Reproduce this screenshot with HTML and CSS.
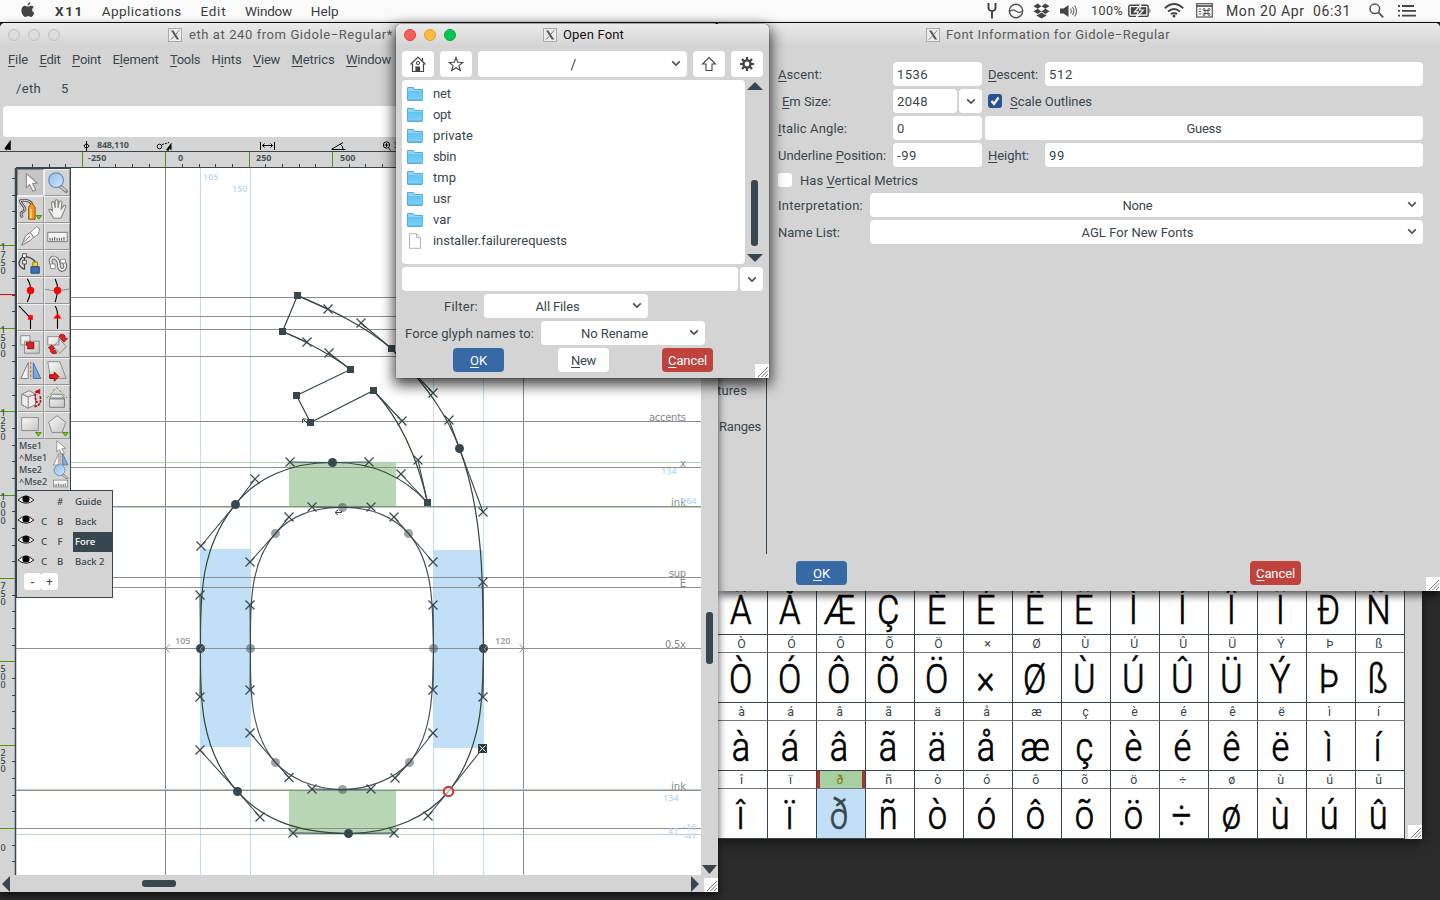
FILE: index.html
```html
<!DOCTYPE html>
<html lang="en">
<head>
<meta charset="utf-8">
<title>X11</title>
<link rel="stylesheet" href="styles.css">
</head>
<body>
<svg class="defs" width="0" height="0">
  <defs>
    <linearGradient id="fold" x1="0" y1="0" x2="0" y2="1"><stop offset="0" stop-color="#63c3f3"/><stop offset="1" stop-color="#7ad0fb"/></linearGradient>
    <linearGradient id="glass" x1="0" y1="0" x2="1" y2="1"><stop offset="0" stop-color="#8fbdf0"/><stop offset="1" stop-color="#d3e6fa"/></linearGradient>
    <linearGradient id="grey" x1="0" y1="0" x2="1" y2="1"><stop offset="0" stop-color="#fafafa"/><stop offset="1" stop-color="#c4c6c2"/></linearGradient>
    <symbol id="xlogo" viewBox="0 0 14 14"><rect x=".5" y=".5" width="13" height="13" fill="#ececec" stroke="#aaa"/><path d="M3 2.5h2.4l5.800 9H8.800z" fill="#555"/><path d="M11.200 2.300 7.800 6.300M6.200 8.200 2.800 11.700" stroke="#777" stroke-width="1"/></symbol>
    <symbol id="chev" viewBox="0 0 10 7"><path d="M1.200 1.300 5 5.100 8.800 1.300" fill="none" stroke="#4b5357" stroke-width="1.700"/></symbol>
    <symbol id="folder" viewBox="0 0 16 14"><path d="M.5 13V.5h6l1 2h8V13z" fill="#8fd3f5" stroke="#54add8"/><path d="M1 4h14.500v9H1z" fill="url(#fold)"/><path d="M.5 13.200h15" stroke="#3f9cc9"/></symbol>
    <symbol id="grip" viewBox="0 0 14 14"><rect width="14" height="14" fill="#fff"/><path d="M3 13 13 3M6.500 13 13 6.500M10 13l3-3" stroke="#777" stroke-width="1" fill="none"/></symbol>
    <symbol id="eye" viewBox="0 0 18 12"><path d="M1 6Q8-1.500 17 6 9 12.500 1 6z" fill="#fff" stroke="#222"/><circle cx="9" cy="5" r="3.600" fill="#000"/></symbol>
    <symbol id="arrow" viewBox="0 0 27 27"><path d="M9 4v15l3.600-3.200L16 23l3.300-1.500-3.500-6.700 5-.6z" fill="#fff" stroke="#8a8a8a" stroke-width="1.200"/></symbol>
    <symbol id="lens" viewBox="0 0 27 27"><path d="m16 17 7 6" stroke="#8b8b86" stroke-width="4" stroke-linecap="round"/><path d="m17 18 5.500 4.500" stroke="#ddd" stroke-width="1.500"/><circle cx="12" cy="11" r="8" fill="url(#glass)" stroke="#6d8fb5" stroke-width="1.300"/></symbol>
    <symbol id="rule" viewBox="0 0 27 27"><rect x="3" y="9" width="21" height="10" fill="#f3f3f1" stroke="#777"/><path d="M5.500 18v-3M8 18v-3M10.500 18v-4M13 18v-3M15.500 18v-3M18 18v-3M20.500 18v-4" stroke="#444" fill="none"/></symbol>
    <symbol id="flip" viewBox="0 0 27 27"><path d="M11 4v17H3z" fill="#f4f4f4" stroke="#777"/><path d="M16.500 4v17h8z" fill="#7ea9dc" stroke="#3d6da9"/><path d="M13.800 3v19" stroke="#c85e16" stroke-dasharray="3 1.500"/></symbol>
  </defs>
</svg>

<header class="menubar">
  <svg class="apple" width="14" height="16" viewBox="0 0 14 16"><path d="M9.300 0C9.500 1.700 8.200 3.400 6.700 3.500 6.500 1.800 8 .3 9.300 0zM12.700 5.200c-2.200 1.300-1.900 4.600.6 5.600-.7 2-1.900 4-3.200 4.100-1 .1-1.500-.6-2.800-.6s-1.800.6-2.800.6C2.300 14.800.3 11 .4 8 .5 5.300 2.300 3.800 4 3.800c1.200 0 2.100.8 3 .8s2-.9 3.400-.8c.9 0 1.800.5 2.300 1.400z" fill="#444"/></svg>
  <nav class="mainmenu">
    <b data-w="29">X11</b><span data-w="80">Applications</span><span data-w="26">Edit</span><span data-w="47">Window</span><span data-w="28">Help</span>
  </nav>
  <div class="status">
    <svg width="12" height="16" viewBox="0 0 12 16"><path d="M2.500 0v4.500Q2.500 8 6 8T9.500 4.500V0M6 8v7.500" fill="none" stroke="#444" stroke-width="1.900"/></svg>
    <svg class="s-ring" width="16" height="16" viewBox="0 0 16 16"><circle cx="8" cy="8" r="6.700" fill="none" stroke="#555" stroke-width="1.400"/><path d="M1.500 9C5 5.500 6 7 8.500 8.500S12 9.500 14.500 8" fill="none" stroke="#555" stroke-width="1.300"/></svg>
    <svg class="s-drop" width="17" height="16" viewBox="0 0 17 16"><path d="M4.600.5 8.500 3.300 4.700 5.800.5 3.200zM12.400.5 8.500 3.300l3.800 2.500 4.200-2.600zM.5 8.300l4.200-2.500 3.800 2.600-3.900 2.700zM16.500 8.300l-4.200-2.500-3.800 2.600 3.900 2.700zM8.500 9.500l3.900 2.500.9-.5v1.300L8.500 15.600 3.700 12.800v-1.300l.9.500z" fill="#444"/></svg>
    <svg class="s-vol" width="18" height="14" viewBox="0 0 18 14"><path d="M0 4.500h3.500L8.500 1v12L3.500 9.500H0z" fill="#444"/><path d="M10.500 4.500q1.500 2.500 0 5M12.500 3q2.800 4 0 8M14.600 1.500q4 5.500 0 11" fill="none" stroke="#666" stroke-width="1.100"/></svg>
    <span class="pct" data-w="32">100%</span>
    <svg class="s-bat" width="24" height="14" viewBox="0 0 24 14"><rect x=".8" y="1.200" width="19.400" height="11.200" rx="1.500" fill="none" stroke="#444" stroke-width="1.400"/><rect x="2.800" y="3.200" width="15.400" height="7.200" fill="#444"/><path d="M21.500 4.500q2 2.300 0 4.600z" fill="#444"/><path d="M13 .5 6.500 7.800h3.800L8.500 13.300 15.500 6h-4z" fill="#444" stroke="#fafafa" stroke-width="1.200"/></svg>
    <svg class="s-wifi" width="20" height="15" viewBox="0 0 20 15"><path d="M.8 5.200Q10-3 19.200 5.200M4 8.400q6-5 12 0M7 11.300q3-2.500 6 0" fill="none" stroke="#444" stroke-width="1.900"/><circle cx="10" cy="13" r="1.500" fill="#444"/></svg>
    <svg class="s-cal" width="17" height="15" viewBox="0 0 17 15"><rect x=".7" y=".7" width="15.600" height="13.300" fill="none" stroke="#555" stroke-width="1.200"/><path d="M1 3h15" stroke="#444" stroke-width="1.600"/><path d="M3 6h2M3 8.500h2M3 11h2" stroke="#666"/><path d="M9 7.500v3h3v-3zM9 7.500H8A1 1 0 1 1 9 6.500zM12 7.500v-1a1 1 0 1 1 1 1zM9 10.500v1a1 1 0 1 1-1-1zM12 10.500h1a1 1 0 1 1-1 1z" stroke="#444" stroke-width=".9" fill="none"/></svg>
    <span class="clock" data-w="125">Mon 20 Apr&nbsp; 06:31</span>
    <svg class="s-find" width="15" height="15" viewBox="0 0 15 15"><circle cx="5.800" cy="5.800" r="4.800" fill="none" stroke="#555" stroke-width="1.500"/><path d="m9.300 9.300 5 5" stroke="#555" stroke-width="1.900"/></svg>
    <svg class="s-list" width="19" height="12" viewBox="0 0 19 12"><path d="M0 1h2M4 1h12M0 5.800h2M4 5.800h14M0 10.600h2M4 10.600h14" stroke="#444" stroke-width="1.800"/></svg>
  </div>
</header>

<section class="window fontview">
  <div class="glyphs" id="glyphs"></div>
  <div class="fv-scroll"></div>
  <svg class="grip" width="14" height="14"><use href="#grip"/></svg>
</section>

<section class="window fontinfo">
  <div class="titlebar"><svg width="14" height="14"><use href="#xlogo"/></svg><span data-w="224">Font Information for Gidole−Regular</span></div>
  <div class="form">
    <div class="frow"><label class="l1"><span data-w="44"><u>A</u>scent:</span></label><div class="field w1"><span data-w="31">1536</span></div><label class="l2"><span data-w="50"><u>D</u>escent:</span></label><div class="field grow"><span data-w="24">512</span></div></div>
    <div class="frow"><label class="l1 ind"><span data-w="49"><u>E</u>m Size:</span></label><div class="field wem"><span data-w="31">2048</span></div><div class="field drop"><svg width="10" height="7"><use href="#chev"/></svg></div><i class="check on"><svg width="14" height="14" viewBox="0 0 14 14"><path d="m3.500 7 2.500 3 4.500-6.500" fill="none" stroke="#fff" stroke-width="2.200"/></svg></i><span data-w="82"><u>S</u>cale Outlines</span></div>
    <div class="frow"><label class="l1"><span data-w="69"><u>I</u>talic Angle:</span></label><div class="field w1"><span data-w="7">0</span></div><div class="field grow mid gap3"><span data-w="35">Guess</span></div></div>
    <div class="frow"><label class="l1"><span data-w="108">Underline <u>P</u>osition:</span></label><div class="field w1"><span data-w="20">-99</span></div><label class="l2"><span data-w="41"><u>H</u>eight:</span></label><div class="field grow"><span data-w="16">99</span></div></div>
    <div class="frow vrow"><i class="check"></i><span data-w="118">Has <u>V</u>ertical Metrics</span></div>
    <div class="frow"><label class="l3"><span data-w="85">Interpretation:</span></label><div class="field grow mid sel"><span data-w="30">None</span><svg width="10" height="7"><use href="#chev"/></svg></div></div>
    <div class="frow"><label class="l3"><span data-w="62">Name List:</span></label><div class="field grow mid sel"><span data-w="112">AGL For New Fonts</span><svg width="10" height="7"><use href="#chev"/></svg></div></div>
  </div>
  <aside class="tabs"><span data-w="30">tures</span><span data-w="42">Ranges</span></aside>
  <footer class="actions"><button class="btn blue"><span data-w="17"><u>O</u>K</span></button><button class="btn red"><span data-w="39"><u>C</u>ancel</span></button></footer>
  <svg class="grip" width="14" height="14"><use href="#grip"/></svg>
</section>

<section class="window charview">
  <div class="titlebar"><i class="light"></i><i class="light"></i><i class="light"></i><svg width="14" height="14"><use href="#xlogo"/></svg><span data-w="204">eth at 240 from Gidole−Regular*</span></div>
  <nav class="cmenu"><span data-w="20"><u>F</u>ile</span><span data-w="21"><u>E</u>dit</span><span data-w="29"><u>P</u>oint</span><span data-w="46">E<u>l</u>ement</span><span data-w="30"><u>T</u>ools</span><span data-w="30">H<u>i</u>nts</span><span data-w="27"><u>V</u>iew</span><span data-w="43"><u>M</u>etrics</span><span data-w="45"><u>W</u>indow</span></nav>
  <div class="cinfo"><span data-w="25">/eth</span><span>5</span></div>
  <div class="wordbox"></div>
  <svg class="rulertop" width="718" height="31" viewBox="0 137 718 31">
    <path d="M5 149 10 142V150M7 146l-1 4" fill="#000" stroke="#000" stroke-width="1.500"/>
    <path d="M86.500 141v10M83.800 146l2.700-2.700 2.700 2.700-2.700 2.700z" fill="#d4d4d4" stroke="#000"/>
    <circle cx="159.500" cy="146.500" r="2.300" fill="none" stroke="#000"/><path d="M162 144.500l7-2" stroke="#000" stroke-dasharray="2 1"/><path d="M166 150 171.500 142.500v8l-2-2-1 2.500z" fill="#000"/>
    <path d="M260.500 142v8M274.500 142v8M262.500 145.500h10M264.500 143.500l-2 2 2 2M270.500 143.500l2 2-2 2" fill="none" stroke="#000"/>
    <path d="M331.500 149.500h14M332 149l11-6.500M340 144q3 2 3 5" fill="none" stroke="#000"/>
    <circle cx="386.500" cy="145" r="3.200" fill="none" stroke="#000"/><path d="M384.500 145h4M386.500 143v4M388.500 147.500l2 3" stroke="#000"/>
    <text class="rl" x="97" y="148" textLength="32">848,110</text><text class="rl" x="394" y="148">300%</text>
    <g id="ticksTop"></g>
  </svg>
  <div class="work">
    <svg class="canvas" width="701" height="708" viewBox="0 168 701 708">
      <rect x="0" y="168" width="16" height="708" fill="#d4d4d4"/><rect x="16" y="168" width="686" height="708" fill="#fff"/>
      <g id="ticksLeft"></g>
      <path d="M15.500 168v708" stroke="#38474f" stroke-width="1.500"/>
      <path d="M200 549h50v198h-50zM433 550h50v198h-50z" fill="#c1dff6"/>
      <path d="M289 462h107v44H289zM289 790h107v44H289z" fill="#b6d6b4"/>
      <path d="M200.500 168v708M250.500 168v708M433.500 168v708M483.500 168v708" stroke="#bfddf5"/>
      <path d="M16 297.500h686M16 316.500h686M16 329.500h686M16 356.500h686M16 421.500h686M16 467.500h686M16 506.500h686M16 577.500h686M16 587.500h686M16 648.500h686M16 790.500h686M16 828.500h686M165.500 168v708M523.500 168v708" stroke="#8c8e90"/>
      <path d="M16 462.500h686M16 507.500h686M16 789.500h686M16 834.500h686" stroke="#a8cfa4" stroke-opacity=".85"/>
      <g class="gl" text-anchor="end"><text x="686" y="421" textLength="37">accents</text><text x="686" y="467">x</text><text x="686" y="506" textLength="15">ink</text><text x="686" y="577" textLength="17">sup</text><text x="686" y="587">E</text><text x="686" y="648" textLength="21">0.5x</text><text x="686" y="790" textLength="15">ink</text></g>
      <g class="bl"><text x="203" y="180">105</text><text x="232" y="192">150</text><text x="661" y="474">134</text><text x="681" y="504">964</text><text x="663" y="801">134</text><text x="683" y="830">-16</text><text x="668" y="834">41</text><text x="683" y="839">-41</text></g>
      <g class="gm"><text x="175" y="644">105</text><text x="495" y="644">120</text></g>
      <g id="outline"></g>
    </svg>
    <div class="vscroll"><i class="thumb"></i><svg width="15" height="9"><path d="M0 0h15L7.500 9z" fill="#38474f"/></svg></div>
  </div>
  <div class="hscroll"><svg width="8" height="16"><path d="M8 0v16L0 8z" fill="#38474f"/></svg><i class="thumb"></i><svg class="right" width="8" height="16"><path d="M0 0v16l8-8z" fill="#38474f"/></svg></div>
  <svg class="grip" width="14" height="14"><use href="#grip"/></svg>
</section>

<section class="palette tools">
  <div class="toolgrid">
    <i class="on"><svg viewBox="0 0 27 27"><use href="#arrow"/></svg></i>
    <i><svg viewBox="0 0 27 27"><use href="#lens"/></svg></i>
    <i><svg viewBox="0 0 27 27"><path d="M5 22C-1 15 10 17 7 11.500S-1 3.500 6 3.500q9 0 9 6" fill="none" stroke="#555" stroke-width="3"/><path d="M5 22C-1 15 10 17 7 11.500S-1 3.500 6 3.500q9 0 9 6" fill="none" stroke="#e8e8e8" stroke-width="1"/><path d="M11.500 11 14.500 6l4 5v13h-7z" fill="#f2951c" stroke="#8f5105"/><path d="M14 13v10" stroke="#ffd084" stroke-width="2"/><path d="M19.500 20h6l-3 4z" fill="#73d216" stroke="#3f8a05"/></svg></i>
    <i><svg viewBox="0 0 27 27"><path d="M9.500 23 4 14q1-2 4 1L7 6q1.500-2 3 0l1 6V4q1.500-2 3 0v8l1.500-7q1.800-1.500 2.800.5L17.500 13l3-4q2-.5 2 1.500L19 19l-2 4z" fill="#f2f2f0" stroke="#85857f" stroke-width="1.200"/></svg></i>
    <i><svg viewBox="0 0 27 27"><path d="M4 23 8 13l5-4 4 5-4 4z" fill="#ededeb" stroke="#777"/><path d="M13.500 9 20 3l3.500 2-1.500 6-5 3.500z" fill="#fff" stroke="#888"/><path d="m6 20 7-7" stroke="#777"/></svg></i>
    <i><svg viewBox="0 0 27 27"><use href="#rule"/></svg></i>
    <i><svg viewBox="0 0 27 27"><path d="M1 13Q3 5 9 6t10 6M7 5v15M7 20Q1 17 1 13" fill="none" stroke="#444" stroke-width="1.400"/><path d="M5 3h4v4H5zM5 10h4v4H5z" fill="#fff" stroke="#444"/><path d="M16 12h5v5h-5z" fill="#f5d434" stroke="#987b00"/><path d="M14 17h9v7h-9z" fill="#3d70b4" stroke="#1e4274"/></svg></i>
    <i class="hl"><svg viewBox="0 0 27 27"><path d="M8 16C3 8 9 5 13 9s0 9 4 11 7-4 3-8" fill="none" stroke="#666" stroke-width="4"/><path d="M8 16C3 8 9 5 13 9s0 9 4 11 7-4 3-8" fill="none" stroke="#eee" stroke-width="2"/><path d="M6 14h5v5H6zM17 9h5v4h-5z" fill="#fff" stroke="#888"/></svg></i>
    <i><svg viewBox="0 0 27 27"><path d="M10 1q4 6 3.500 12.500T10 26" fill="none" stroke="#000" stroke-width="1.200"/><circle cx="13.500" cy="13.500" r="4" fill="#f00"/></svg></i>
    <i><svg viewBox="0 0 27 27"><path d="M0 12q6 2 13 1.500T26 12" fill="none" stroke="#888"/><path d="M11 1q3 6 2.500 12.500T11 26" fill="none" stroke="#000" stroke-width="1.200"/><circle cx="13.500" cy="13.500" r="4" fill="#f00"/></svg></i>
    <i><svg viewBox="0 0 27 27"><path d="M1 1 13.500 14v12" fill="none" stroke="#000" stroke-width="1.200"/><path d="M11 11h5v5h-5z" fill="#f00"/></svg></i>
    <i><svg viewBox="0 0 27 27"><path d="M11 1q3 5 2.500 12v13" fill="none" stroke="#000" stroke-width="1.200"/><path d="M9 14.500 13.500 9l4.500 5.500z" fill="#f00"/></svg></i>
    <i><svg viewBox="0 0 27 27"><path d="M3 4h10v10H3zM7 10h16v13H7z" fill="url(#grey)" stroke="#888"/><path d="m9 11 2 1 2-2 2 2 2-1v7h-7l1-2-2-2z" fill="#dd2020" stroke="#900"/></svg></i>
    <i><svg viewBox="0 0 27 27"><path d="M3 5h12v9H3zM16 8l7 8-7 7-7-7z" fill="url(#grey)" stroke="#888"/><path d="M16 3q6-2 6 4h2.500l-4 4-4-4h2q0-2-3-1zM3.500 17l4-3 3 4H8.500q0 3 3 2l1 3q-7 2-7-5z" fill="#dd2020" stroke="#900" stroke-width=".7"/></svg></i>
    <i><svg viewBox="0 0 27 27"><use href="#flip"/></svg></i>
    <i><svg viewBox="0 0 27 27"><path d="M3 3h13l7 18H6z" fill="url(#grey)" stroke="#888"/><path d="M5 17h5v-3l5 5-5 5v-3H5z" fill="#dd2020" stroke="#900"/></svg></i>
    <i><svg viewBox="0 0 27 27"><path d="m4 9 8-4 7 4v11l-8 4-7-4zM4 9l7 3 8-3M11 12v12" fill="#eee" stroke="#777"/><path d="M21 5q-5 6 0 13M24 11q2 11-7 11" fill="none" stroke="#b11" stroke-width="1.800" stroke-dasharray="3 1"/><path d="m18 6 6-3v6z" fill="#c11"/></svg></i>
    <i><svg viewBox="0 0 27 27"><path d="M5 14h16v9H5zM8 9h10l3 4H5z" fill="url(#grey)" stroke="#777"/><path d="M2 13 12.500 1.500 24 13" fill="none" stroke="#4e9a06" stroke-dasharray="3 2"/></svg></i>
    <i><svg viewBox="0 0 27 27"><path d="M4 5h18v14H4z" fill="url(#grey)" stroke="#888"/><path d="M19 21h6l-3 4z" fill="#73d216" stroke="#3f8a05"/></svg></i>
    <i><svg viewBox="0 0 27 27"><path d="m13 3 9.500 7-4 11H7.500L4 10z" fill="url(#grey)" stroke="#888"/><path d="M19 21h6l-3 4z" fill="#73d216" stroke="#3f8a05"/></svg></i>
  </div>
  <div class="mse">
    <ul><li>Mse1</li><li>^Mse1</li><li>Mse2</li><li>^Mse2</li></ul>
    <div class="mico"><svg viewBox="4 3 20 20"><use href="#arrow" width="27" height="27"/></svg><svg viewBox="2 2 23 22"><use href="#flip" width="27" height="27"/></svg><svg viewBox="2 2 23 22"><use href="#lens" width="27" height="27"/></svg><svg viewBox="2 3 23 22"><use href="#rule" width="27" height="27"/></svg></div>
  </div>
</section>

<section class="palette layers">
  <div class="lrow"><svg width="18" height="12"><use href="#eye"/></svg><b></b><b>#</b><span>Guide</span></div>
  <div class="lrow"><svg width="18" height="12"><use href="#eye"/></svg><b>C</b><b>B</b><span>Back</span></div>
  <div class="lrow"><svg width="18" height="12"><use href="#eye"/></svg><b>C</b><b>F</b><span class="cur">Fore</span></div>
  <div class="lrow"><svg width="18" height="12"><use href="#eye"/></svg><b>C</b><b>B</b><span>Back 2</span></div>
  <div class="lbtn"><button>-</button><button>+</button></div>
</section>

<section class="window dialog">
  <div class="titlebar"><i class="light r"></i><i class="light y"></i><i class="light g"></i><svg width="14" height="14"><use href="#xlogo"/></svg><span data-w="61">Open Font</span></div>
  <div class="dtools">
    <div class="field sq"><svg width="16" height="16" viewBox="0 0 16 16"><path d="M.5 8.500 8 1l7.500 7.500M12.500 5V2" fill="none" stroke="#444" stroke-width="1.200"/><path d="M2.500 7.500v8h11v-8M6 15.500V11h3.500v4.500" fill="none" stroke="#444" stroke-width="1.200"/><path d="M6 11h3.500v4.500H6z" fill="#444"/><circle cx="8" cy="7" r="1.600" fill="none" stroke="#444"/></svg></div>
    <div class="field sq"><svg width="16" height="16" viewBox="0 0 16 16"><path d="m8 1.500 1.800 4.800 5 .2-3.900 3.100 1.400 4.900L8 11.700l-4.300 2.800 1.400-4.900L1.200 6.500l5-.2z" fill="none" stroke="#444" stroke-width="1.100"/></svg></div>
    <div class="field grow mid sel path"><span>/</span><svg width="10" height="7"><use href="#chev"/></svg></div>
    <div class="field sq"><svg width="16" height="16" viewBox="0 0 16 16"><path d="M8 1.500 14.500 8H11v6.500H5V8H1.500z" fill="none" stroke="#444" stroke-width="1.100"/></svg></div>
    <div class="field sq"><svg width="16" height="16" viewBox="0 0 16 16"><path d="M8 1v14M1 8h14M3 3l10 10M13 3 3 13" stroke="#444" stroke-width="2.200"/><circle cx="8" cy="8" r="3.600" fill="#fff" stroke="#444" stroke-width="2.400"/></svg></div>
  </div>
  <div class="dlist">
    <ul class="files">
      <li><svg width="16" height="14"><use href="#folder"/></svg><span data-w="18">net</span></li>
      <li><svg width="16" height="14"><use href="#folder"/></svg><span data-w="18">opt</span></li>
      <li><svg width="16" height="14"><use href="#folder"/></svg><span data-w="40">private</span></li>
      <li><svg width="16" height="14"><use href="#folder"/></svg><span data-w="23">sbin</span></li>
      <li><svg width="16" height="14"><use href="#folder"/></svg><span data-w="23">tmp</span></li>
      <li><svg width="16" height="14"><use href="#folder"/></svg><span data-w="18">usr</span></li>
      <li><svg width="16" height="14"><use href="#folder"/></svg><span data-w="18">var</span></li>
      <li><svg width="16" height="16" viewBox="0 0 16 16"><path d="M2.500.7h7l4 4v10.600h-11z" fill="#fdfdfd" stroke="#b4b4b4"/><path d="M9.500.7v4h4" fill="none" stroke="#b4b4b4"/></svg><span data-w="134">installer.failurerequests</span></li>
    </ul>
    <div class="dscroll"><svg width="16" height="8"><path d="M0 8h16L8 0z" fill="#38474f"/></svg><i class="thumb"></i><svg width="16" height="8"><path d="M0 0h16L8 8z" fill="#38474f"/></svg></div>
  </div>
  <div class="drow name"><div class="field grow"></div><div class="field drop"><svg width="10" height="7"><use href="#chev"/></svg></div></div>
  <div class="drow filter"><span data-w="34">Filter:</span><div class="field mid sel"><span data-w="44">All Files</span><svg width="10" height="7"><use href="#chev"/></svg></div></div>
  <div class="drow force"><span data-w="129">Force glyph names to:</span><div class="field mid sel"><span data-w="67">No Rename</span><svg width="10" height="7"><use href="#chev"/></svg></div></div>
  <div class="drow dbtns"><button class="btn blue"><span data-w="17"><u>O</u>K</span></button><button class="btn"><span data-w="25"><u>N</u>ew</span></button><button class="btn red"><span data-w="39"><u>C</u>ancel</span></button></div>
  <svg class="grip" width="14" height="14"><use href="#grip"/></svg>
</section>
<script src="app.js"></script>
</body>
</html>
```
FILE: styles.css
```css
* { box-sizing: border-box; }
body { margin: 0; width: 1440px; height: 900px; overflow: hidden; position: relative; background: #2b2b2b; font: 13px/16px Roboto, "Noto Sans", sans-serif; color: #38474f; }
u { text-decoration: underline; text-underline-offset: 2px; text-decoration-thickness: 1px; }
svg { display: block; flex: none; }
ul { list-style: none; margin: 0; padding: 0; }
span { white-space: pre; }
button { border: 0; padding: 0; font: inherit; color: inherit; }
.defs { position: absolute; }

.menubar { display: flex; height: 23px; padding: 0 23px 1px 21px; align-items: center; justify-content: space-between; background: #fafafa; border-bottom: 1px solid #111; font-size: 13.5px; color: #3c3c3c; }
.apple { margin-top: -1px; }
.mainmenu { display: flex; gap: 18.7px; margin-left: 20px; margin-right: auto; }
.mainmenu b { margin-right: -1px; font-weight: 700; }
.status { display: flex; align-items: center; }
.s-ring { margin-left: 10px; }
.s-drop { margin-left: 9px; }
.s-vol { margin-left: 10px; }
.pct { margin-left: 13px; font-size: 12.5px; }
.s-bat { margin-left: 5px; }
.s-wifi { margin-left: 12px; }
.s-cal { margin-left: 12px; }
.clock { margin-left: 13px; font-size: 14px; }
.s-find { margin-left: 18px; }
.s-list { margin-left: 14px; }

.window { position: absolute; background: #d4d4d4; }
.titlebar { display: flex; align-items: center; height: 22px; background: linear-gradient(#ebebeb, #d4d4d4); border-radius: 5px 5px 0 0; color: #5b5b5b; }
.light { width: 12px; height: 12px; margin-right: 8px; border-radius: 50%; border: 1px solid #c0c0c0; background: #dcdcdc; }
.grip { position: absolute; right: 0; bottom: 0; }
.field { display: flex; align-items: center; height: 24px; padding: 0 4px; background: #fff; border-radius: 4px; }
.field span, .btn span, .drow > span { padding-top: 2px; }
.grow { flex: 1; }
.mid { justify-content: center; }
.sel { position: relative; }
.sel svg { position: absolute; right: 6px; top: 8px; }
.thumb { display: block; background: #38474f; border-radius: 3px; }
.btn { display: flex; align-items: center; justify-content: center; width: 51px; height: 24px; border-radius: 4px; background: #fff; }
.blue { background: #3769a4; color: #fff; }
.red { background: #c0423d; color: #fff; }

.fontview { left: 718px; top: 583px; width: 704px; height: 256px; display: flex; box-shadow: 0 3px 12px rgba(0,0,0,.6); }
.glyphs { display: grid; grid-template-columns: 50px repeat(13, 49px); grid-template-rows: 52px repeat(3, 18px 50px); width: 687px; background: #fff; border-bottom: 1px solid #38474f; }
.g, .n { display: flex; align-items: center; justify-content: center; overflow: hidden; border-right: 1px solid #38474f; }
.g { border-bottom: 1px solid #38474f; color: #000; font-size: 40.5px; font-weight: 300; line-height: 50px; -webkit-text-stroke: .7px currentColor; }
.g span { transform: translate(-2px, 1px) scaleX(.85); }
.n { border-bottom: 1px solid #777; font-size: 13px; }
.n span { transform: translateX(-1px) scaleX(.95); }
.n.cur { background: #a6d0a2; color: #7a7a10; box-shadow: inset 3px 0 #b03030, inset -3px 0 #b03030; }
.g.cur { background: #c1dff6; color: #38474f; }
.fv-scroll { flex: 1; }

.fontinfo { left: 718px; top: 23px; width: 722px; height: 568px; border-radius: 0 5px 0 0; box-shadow: 0 4px 9px rgba(0,0,0,.7); }
.fontinfo .titlebar { padding: 1px 0 0 208px; border-radius: 0 5px 0 0; gap: 6px; }
.form { display: flex; flex-direction: column; gap: 3px; padding: 17px 17px 0 60px; }
.frow { display: flex; align-items: center; height: 24px; }
.frow label, .frow > span { padding-top: 2px; }
.l1 { width: 115px; }
.frow .ind { padding-left: 4px; }
.l2 { width: 57px; margin-left: 6px; }
.w1 { width: 89px; }
.wem { width: 64px; }
.drop { width: 23px; margin-left: 2px; justify-content: center; padding: 0; }
.gap3 { margin-left: 3px; }
.l3 { width: 92px; }
.form .sel > span { margin-right: 18px; }
.check { width: 14px; height: 14px; margin: 0 8px 0 6px; border-radius: 3px; background: #fff; }
.check.on { background: #285293; }
.vrow { height: 20px; }
.vrow .check { margin-left: 0; }
.tabs { position: absolute; left: 0; top: 300px; width: 49px; height: 231px; padding: 60px 0 0 1px; display: flex; flex-direction: column; align-items: flex-start; gap: 20px; border-right: 1px solid #38474f; }
.tabs span:first-child { margin-left: -2px; }
.actions { position: absolute; left: 78px; right: 139px; bottom: 6px; display: flex; justify-content: space-between; }

.charview { left: 0; top: 23px; width: 718px; height: 869px; border-radius: 5px 5px 0 0; display: flex; flex-direction: column; box-shadow: 0 3px 9px rgba(0,0,0,.7); }
.charview .titlebar { padding: 1px 0 0 8px; }
.charview .titlebar svg { margin: 0 7px 0 100px; }
.cmenu { display: flex; gap: 11.5px; padding: 7px 0 0 8px; height: 34px; }
.cinfo { display: flex; gap: 20px; align-items: center; height: 18px; padding: 2px 0 0 16px; }
.wordbox { height: 31px; margin: 9px 3px 0; background: #fff; border-radius: 4px; }
.rl { font: 700 9px "Noto Sans", sans-serif; fill: #47565d; }
.vr { font: 500 9px "Noto Sans", sans-serif; fill: #38474f; text-anchor: middle; }
.work { display: flex; height: 707px; }
.gl { font: 10px "DejaVu Sans", sans-serif; fill: #85898c; }
.bl { font: 600 9px "Noto Sans", sans-serif; fill: #bcdcf6; }
.gm { font: 600 9px "Noto Sans", sans-serif; fill: #9a9ea1; }
.vscroll { display: flex; flex-direction: column; align-items: center; width: 17px; padding-top: 444px; }
.vscroll .thumb { width: 7px; height: 52px; margin-bottom: 201px; }
.hscroll { display: flex; align-items: center; height: 17px; padding-left: 2px; background: #d4d4d4; z-index: 1; }
.hscroll .thumb { width: 34px; height: 7px; margin-left: 132px; }
.hscroll .right { margin-left: 515px; }
.charview .grip { z-index: 2; }

.palette { position: absolute; background: #d4d4d4; border: 1px solid #38474f; font: 500 9.500px/12px "Noto Sans", sans-serif; }
.tools { left: 16px; top: 168px; width: 55px; height: 323px; box-shadow: 0 -1px #38474f; }
.toolgrid { display: grid; grid-template-columns: 27px 26px; grid-auto-rows: 27px; }
.toolgrid i { border: 1px solid; border-color: #f0f0f0 #969696 #969696 #f0f0f0; }
.toolgrid i.on { background: #c6c6c6; border-color: #888 #eee #eee #888; }
.toolgrid svg { width: 25px; height: 25px; }
.mse { display: flex; justify-content: space-between; padding: 1px 1px 0 2px; font: 500 9px/12px "Noto Sans", sans-serif; }
.mico { display: flex; flex-direction: column; }
.mico svg { width: 17px; height: 15px; margin-bottom: -3px; }
.layers { left: 16px; top: 490px; width: 97px; height: 108px; }
.lrow { display: flex; align-items: center; height: 20px; }
.lrow:first-child { margin-top: 1px; }
.lrow svg { margin-top: -4px; }
.lrow b { width: 16px; text-align: center; font-weight: 500; }
.lrow b:nth-of-type(1) { margin-left: 1px; }
.lrow span { margin-left: 5px; padding-left: 2px; width: 39px; line-height: 20px; }
.lrow .cur { background: #38474f; color: #fff; }
.lbtn { display: flex; margin: 1px 0 0 7px; }
.lbtn button { width: 17px; height: 17px; background: #fff; border-radius: 3px; font-size: 12px; line-height: 17px; }

.dialog { left: 396px; top: 24px; width: 373px; height: 354px; border-radius: 5px 5px 0 0; box-shadow: 0 5px 14px 2px rgba(0,0,0,.75), 0 0 1px #000; }
.dialog .titlebar { padding-left: 8px; color: #111; }
.dialog .titlebar svg { margin: 0 6px 0 79px; }
.light.r { background: #fc5b57; border-color: #e2403c; }
.light.y { background: #fdbc40; border-color: #dfa033; }
.light.g { background: #00c951; border-color: #00a93c; }
.dtools { display: flex; gap: 6px; margin: 5px 6px 0; }
.dtools .field { height: 26px; }
.sq { width: 32px; padding: 0; justify-content: center; }
.path span { margin-right: 18px; font-size: 14px; }
.dtools .path svg { top: 9px; }
.dlist { display: flex; margin: 3px 6px 0; height: 184px; }
.files { width: 343px; padding: 3px 5px; background: #fff; border-radius: 4px; }
.files li { display: flex; align-items: center; gap: 10px; height: 21px; }
.dscroll { display: flex; flex-direction: column; align-items: center; width: 17px; margin-left: 1px; padding-top: 2px; }
.dscroll .thumb { width: 7px; height: 66px; margin: 90px 0 8px; }
.drow { display: flex; align-items: center; height: 24px; margin: 3px 6px 0; }
.drow .sel { width: 164px; }
.drow .sel > span { margin-right: 17px; }
.filter > span { margin: 0 6px 0 42px; }
.force > span { margin: 0 7px 0 3px; }
.dbtns { padding-left: 51px; gap: 54px; }
.dbtns .red { margin-left: -1px; }
```
FILE: app.js
```js
const el = id => document.getElementById(id);

// Glyph table of the font view
const rows = ['ÄÅÆÇÈÉÊËÌÍÎÏÐÑ', 'ÒÓÔÕÖ×ØÙÚÛÜÝÞß', 'àáâãäåæçèéêëìí', 'îïðñòóôõö÷øùúû'];
el('glyphs').innerHTML = rows.map((r, i) => {
  const cells = k => [...r].map(c => `<div class="${k}${c === 'ð' ? ' cur' : ''}"><span>${c}</span></div>`).join('');
  return (i ? cells('n') : '') + cells('g');
}).join('');

// Rulers
let top_ = '<path d="M0 151.500h718M16 167.500h702" stroke="#38474f"/>';
for (let i = -4; i < 36; i++) {
  const x = 82.5 + i * 16.66;
  if (x > 16) top_ += i % 5 === 0 ? `<path d="M${Math.round(x - .5) + .5} 152v15" stroke="#4e9a06"/>` : `<path d="M${Math.floor(x) + .5} 164v4" stroke="#38474f"/>`;
}
[[88, '-250'], [178, '0'], [256, '250'], [340, '500']].forEach(([x, t]) => { top_ += `<text class="rl" x="${x}" y="161">${t}</text>`; });
el('ticksTop').innerHTML = top_;

let left = '<path d="M0 294.500h16" stroke="#e00"/>';
for (let i = -4; i < 38; i++) {
  const y = Math.floor(245.3 + i * 16.66) + .5;
  left += i % 5 === 0 ? `<path d="M0 ${y}h15" stroke="#4e9a06"/>` : `<path d="M12 ${y}h4" stroke="#38474f"/>`;
}
[[247, '1750'], [330, '1500'], [413, '1250'], [497, '1000'], [586, '750'], [669, '500'], [753, '250'], [848, '0']].forEach(([y, t]) => {
  [...t].forEach((c, k) => { left += `<text class="vr" x="3" y="${y + 3 + k * 8}">${c}</text>`; });
});
el('ticksLeft').innerHTML = left;

// Contours: [x, y] is a line target, six numbers are a cubic segment
const outer = [[310.5, 422.5], [296.5, 395.5], [350.5, 369.5], [329, 353, 307, 342, 282.5, 331.5], [297.5, 295.5],
  [328, 309, 361, 323, 391.5, 348.5], [433, 393, 449, 420, 459.5, 448.5], [483, 512, 483, 582, 483.5, 648.5],
  [483, 697, 482.5, 748.5, 448.5, 791.5], [428, 816, 394, 833, 348.5, 833.5], [293, 833, 260, 817, 237.5, 791.5],
  [200, 750, 200, 697, 200.5, 648.5], [200, 595, 201, 546, 235.5, 504.5], [255, 479, 290, 462, 332.5, 462.5],
  [369, 462, 401, 474, 427.5, 502.5], [418, 460, 402, 421, 373.5, 390.5], [310.5, 422.5]];
const inner = [[342.5, 507.5], [312, 507, 289, 517, 275.5, 533.5], [250, 562, 250, 605, 250.5, 648.5],
  [250, 690, 250, 733, 275.5, 762.5], [289, 777.5, 312, 789, 342.5, 789.5], [371, 789, 395, 778, 409.5, 762.5],
  [433, 733, 433, 690, 433.5, 648.5], [433, 605, 433, 562, 408.5, 533.5], [394, 517, 371, 507, 342.5, 507.5]];
const smooth = ['459.5', '483.5', '348.5', '237.5', '200.5', '235.5', '332.5'];
const draw = (pts, color, isInner) => {
  let d = '', handles = '', marks = '', prev;
  pts.forEach((p, i) => {
    d += (i ? (p.length > 2 ? 'C' : 'L') : 'M') + p.join(' ');
    const x = p[p.length - 2], y = p[p.length - 1];
    if (p.length > 2) {
      handles += `M${prev[0]} ${prev[1]}L${p[0]} ${p[1]}M${x} ${y}L${p[2]} ${p[3]}`;
      [[p[0], p[1]], [p[2], p[3]]].forEach(([a, b]) => {
        marks += a === 482.5 ? `<path d="M478 744h9v9h-9z" fill="#2c3a41"/><path d="M479.500 745.500l6 6m0-6l-6 6" stroke="#fff"/>`
          : `<path d="M${a - 4.5} ${b - 4.5}l9 9m0-9l-9 9" stroke="#38474f" stroke-width="1.200"/>`;
      });
    }
    if (isInner) marks += i ? `<circle cx="${x}" cy="${y}" r="4.500" fill="#38474f" fill-opacity=".5"/>` : '';
    else if (x === 448.5) marks += `<circle cx="${x}" cy="${y}" r="4.700" fill="#fff" fill-opacity=".6" stroke="#c0423d" stroke-width="2.200"/>`;
    else if (smooth.includes(String(x))) marks += `<circle cx="${x}" cy="${y}" r="4.500" fill="#38474f"/>`;
    else marks += `<path d="M${x - 3.5} ${y - 3.5}h7v7h-7z" fill="#38474f"/>`;
    prev = [x, y];
  });
  return `<path d="${d}" fill="none" stroke="${color}" stroke-width="1.200"/><path d="${handles}" stroke="#38474f" stroke-width="1.100" fill="none"/>${marks}`;
};
el('outline').innerHTML = draw(outer, '#2f4a30', false) + draw(inner, '#46535a', true) +
  '<path d="M169.500 644.500l-4 4 4 4M203 646l-3 3 3 3M487 646l-3 3 3 3M519.500 644.500l4 4-4 4" fill="none" stroke="#8c9194"/>' +
  '<path d="M335 512.500h6.500v-2M338 510l-3 2.500 3 2.500M302.500 423v-4h4M303 419l5 5" fill="none" stroke="#38474f"/>';

// Spread each label over its measured width
document.querySelectorAll('[data-w]').forEach(n => {
  const w = +n.dataset.w, len = n.textContent.length;
  n.style.letterSpacing = ((w - n.getBoundingClientRect().width) / len).toFixed(3) + 'px';
});
```
